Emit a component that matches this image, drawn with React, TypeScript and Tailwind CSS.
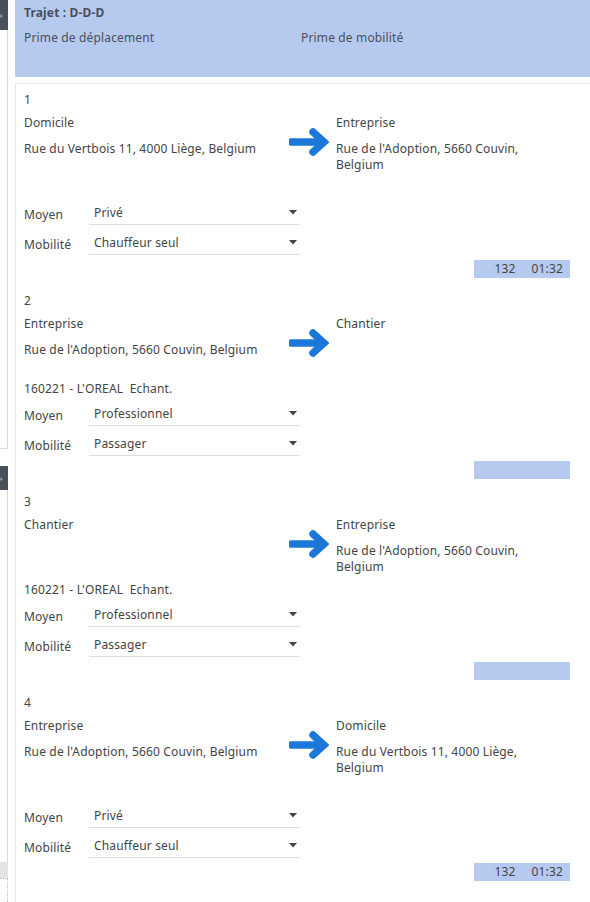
import React from "react";

type Leg = {
  num: string;
  fromLabel: string;
  fromAddr: string;
  toLabel: string;
  toAddr: string;
  project: string;
  moyen: string;
  mobilite: string;
  km: string;
  time: string;
};

const legs: Leg[] = [
  {
    num: "1",
    fromLabel: "Domicile",
    fromAddr: "Rue du Vertbois 11, 4000 Liège, Belgium",
    toLabel: "Entreprise",
    toAddr: "Rue de l'Adoption, 5660 Couvin, Belgium",
    project: "",
    moyen: "Privé",
    mobilite: "Chauffeur seul",
    km: "132",
    time: "01:32",
  },
  {
    num: "2",
    fromLabel: "Entreprise",
    fromAddr: "Rue de l'Adoption, 5660 Couvin, Belgium",
    toLabel: "Chantier",
    toAddr: "",
    project: "160221 - L'OREAL  Echant.",
    moyen: "Professionnel",
    mobilite: "Passager",
    km: "",
    time: "",
  },
  {
    num: "3",
    fromLabel: "Chantier",
    fromAddr: "",
    toLabel: "Entreprise",
    toAddr: "Rue de l'Adoption, 5660 Couvin, Belgium",
    project: "160221 - L'OREAL  Echant.",
    moyen: "Professionnel",
    mobilite: "Passager",
    km: "",
    time: "",
  },
  {
    num: "4",
    fromLabel: "Entreprise",
    fromAddr: "Rue de l'Adoption, 5660 Couvin, Belgium",
    toLabel: "Domicile",
    toAddr: "Rue du Vertbois 11, 4000 Liège, Belgium",
    project: "",
    moyen: "Privé",
    mobilite: "Chauffeur seul",
    km: "132",
    time: "01:32",
  },
];

const Arrow = () => (
  <svg width="40" height="28" viewBox="0 0 40 28">
    <path d="M2 14 H31" stroke="#1b78d8" strokeWidth="7.5" strokeLinecap="round" />
    <path
      d="M24 4 L35 14 L24 24"
      stroke="#1b78d8"
      strokeWidth="7.5"
      fill="none"
      strokeLinecap="round"
      strokeLinejoin="miter"
    />
  </svg>
);

const Select = ({ label, value }: { label: string; value: string }) => (
  <div className="flex h-[22px] items-center">
    <div className="w-[65px] pt-[1px]">{label}</div>
    <div className="flex h-[22px] w-[211px] items-center justify-between border-b border-[#dedede] pl-[5px] pr-[3px]">
      <span className="-mt-[2px]">{value}</span>
      <svg width="8" height="5" viewBox="0 0 8 5" className="-mt-[3px]">
        <path d="M0 0 H8 L4 4.5 Z" fill="#444" />
      </svg>
    </div>
  </div>
);

const LegBlock = ({ leg }: { leg: Leg }) => (
  <section className="flex flex-col pb-[14px]">
    <div className="h-[16px] pt-[1px] leading-[16px]">{leg.num}</div>
    <div className="mt-[8px] flex h-[58px]">
      <div className="w-[265px]">
        <div className="h-[16px] leading-[16px]">{leg.fromLabel}</div>
        <div className="mt-[10px] leading-[16px]">{leg.fromAddr}</div>
      </div>
      <div className="w-[47px] pt-[13px]">
        <Arrow />
      </div>
      <div className="w-[210px]">
        <div className="h-[16px] leading-[16px]">{leg.toLabel}</div>
        <div className="mt-[10px] leading-[16px]">{leg.toAddr}</div>
      </div>
    </div>
    <div className="mt-[7px] h-[16px] whitespace-pre leading-[16px]">{leg.project}</div>
    <div className="mt-[7px]">
      <Select label="Moyen" value={leg.moyen} />
    </div>
    <div className="mt-[8px]">
      <Select label="Mobilité" value={leg.mobilite} />
    </div>
    <div className="mt-[5px] flex justify-end">
      <div className="flex h-[18px] w-[96px] items-center justify-end gap-[16px] bg-[#b6caf0] pr-[7px] leading-[18px]">
        <span>{leg.km}</span>
        <span>{leg.time}</span>
      </div>
    </div>
  </section>
);

export default function App() {
  return (
    <div
      className="flex h-[902px] w-[590px] overflow-hidden bg-white text-[12px] tracking-[0.15px] text-[#444]"
      style={{ fontFamily: '"Noto Sans", "Open Sans", sans-serif' }}
    >
      {/* partial side panel on the left */}
      <div className="flex w-[8px] shrink-0 flex-col">
        <div className="flex h-[30px] items-center bg-[#48505a] text-[7px] leading-none text-white">›</div>
        <div className="h-[419px] border-r border-b border-[#d9d9d9]" />
        <div className="h-[17px]" />
        <div className="flex h-[24px] items-center bg-[#48505a] text-[7px] leading-none text-white">›</div>
        <div className="h-[372px] border-r border-[#d9d9d9]" />
        <div className="h-[16px] bg-[#e3e3e3]" />
        <div className="flex-1 border-t border-r border-dotted border-[#bbb]" />
      </div>

      <div className="ml-[7px] flex flex-1 flex-col">
        <header className="h-[77px] bg-[#b6caf0] pl-[9px] pt-[4px] text-[#4b4f5a]">
          <div className="h-[17px] text-[12px] font-bold leading-[17px]">Trajet : D-D-D</div>
          <div className="mt-[9px] flex h-[16px] leading-[16px]">
            <div className="w-[277px]">Prime de déplacement</div>
            <div>Prime de mobilité</div>
          </div>
        </header>
        <main className="mt-[6px] flex-1 border-t border-l border-[#e6e6e6] pl-[8px] pr-[20px] pt-[7px]">
          {legs.map((leg) => (
            <LegBlock key={leg.num} leg={leg} />
          ))}
        </main>
      </div>
    </div>
  );
}
